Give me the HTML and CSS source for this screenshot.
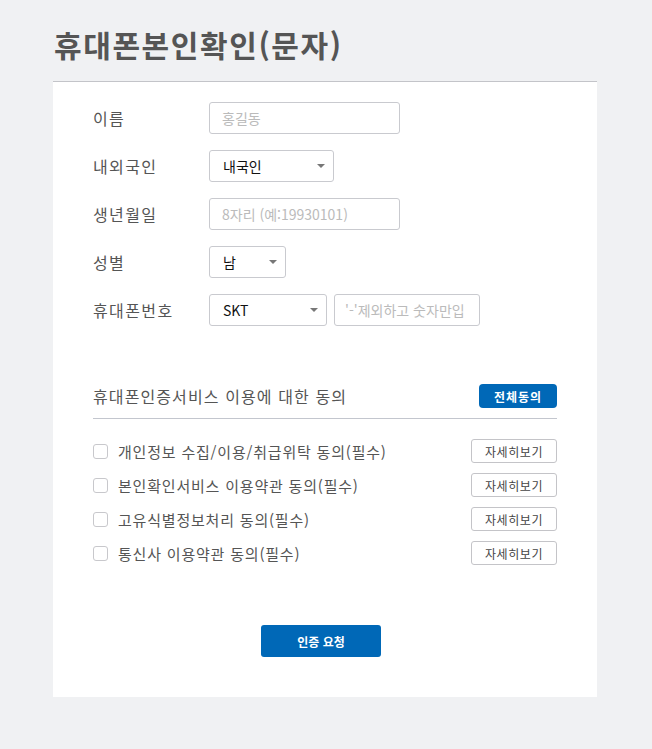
FILE: index.html
```html
<!DOCTYPE html>
<html lang="ko">
<head>
<meta charset="utf-8">
<title>휴대폰본인확인(문자)</title>
<link rel="stylesheet" href="styles.css">
</head>
<body>
<div class="page">
  <h1 class="title">휴대폰본인확인(문자)</h1>
  <div class="card">
    <div class="form">
      <div class="row">
        <label class="label">이름</label>
        <input class="input w-name" type="text" placeholder="홍길동">
      </div>
      <div class="row">
        <label class="label">내외국인</label>
        <div class="select w-nat"><span>내국인</span><i class="caret"></i></div>
      </div>
      <div class="row">
        <label class="label">생년월일</label>
        <input class="input w-name" type="text" placeholder="8자리 (예:19930101)">
      </div>
      <div class="row">
        <label class="label">성별</label>
        <div class="select w-sex"><span>남</span><i class="caret"></i></div>
      </div>
      <div class="row">
        <label class="label">휴대폰번호</label>
        <div class="select w-tel"><span>SKT</span><i class="caret"></i></div>
        <input class="input w-phone" type="text" placeholder="'-'제외하고 숫자만입">
      </div>
    </div>

    <div class="agree">
      <div class="agree-head">
        <span class="agree-title">휴대폰인증서비스 이용에 대한 동의</span>
        <button class="btn-all">전체동의</button>
      </div>
      <ul class="agree-list">
        <li class="agree-item"><span class="check"></span><span class="agree-text">개인정보 수집/이용/취급위탁 동의(필수)</span><button class="btn-more">자세히보기</button></li>
        <li class="agree-item"><span class="check"></span><span class="agree-text">본인확인서비스 이용약관 동의(필수)</span><button class="btn-more">자세히보기</button></li>
        <li class="agree-item"><span class="check"></span><span class="agree-text">고유식별정보처리 동의(필수)</span><button class="btn-more">자세히보기</button></li>
        <li class="agree-item"><span class="check"></span><span class="agree-text">통신사 이용약관 동의(필수)</span><button class="btn-more">자세히보기</button></li>
      </ul>
    </div>

    <div class="submit-wrap">
      <button class="btn-submit">인증 요청</button>
    </div>
  </div>
</div>
</body>
</html>
```

FILE: styles.css
```css
* { box-sizing: border-box; }
html, body { margin: 0; padding: 0; }
body {
  background: #f0f1f3;
  font-family: "Noto Sans CJK KR", "Noto Sans", "Liberation Sans", sans-serif;
  color: #555;
}
.page {
  width: 544px;
  margin-left: 53px;
  padding-top: 24px;
}
.title {
  margin: 0 0 17px 1px;
  font-size: 30px;
  line-height: 40px;
  font-weight: 700;
  color: #555;
  letter-spacing: 1.6px;
}
.card {
  background: #fff;
  border-top: 1px solid #c3c4c9;
  height: 616px;
  padding: 20px 40px 0 40px;
}
.form {
  display: flex;
  flex-direction: column;
  gap: 16px;
}
.row {
  display: flex;
  align-items: center;
  height: 32px;
}
.label {
  width: 116px;
  font-size: 16px;
  letter-spacing: 1.4px;
  color: #555;
}
.input, .select {
  height: 32px;
  border: 1px solid #c9cacf;
  border-radius: 3px;
  background: #fff;
  font-family: inherit;
  font-size: 14px;
  padding: 0 12px;
  color: #222;
}
.input::placeholder { color: #bbb; }
.w-name { width: 191px; }
.w-nat { width: 125px; }
.w-sex { width: 77px; }
.w-tel { width: 118px; }
.w-phone { width: 146px; margin-left: 7px; padding: 0 10px; }
.select {
  display: flex;
  align-items: center;
  justify-content: space-between;
  padding: 0 8px 0 13px;
}
.select span { color: #111; font-size: 14px; }
.caret {
  width: 0; height: 0;
  border-left: 4px solid transparent;
  border-right: 4px solid transparent;
  border-top: 4px solid #777;
}
.agree { margin-top: 58px; }
.agree-head {
  display: flex;
  justify-content: space-between;
  align-items: center;
  height: 24px;
  margin-bottom: 10px;
}
.agree-title { font-size: 16px; letter-spacing: 1.1px; color: #555; }
.btn-all {
  width: 78px; height: 24px;
  border: none;
  border-radius: 4px;
  background: #0068b7;
  color: #fff;
  font-family: inherit;
  font-size: 12px;
  font-weight: 700;
  letter-spacing: 1px;
  padding: 0;
}
.agree-list {
  list-style: none;
  margin: 0;
  padding: 20px 0 0 0;
  border-top: 1px solid #c3c6ce;
  display: flex;
  flex-direction: column;
  gap: 10px;
}
.agree-item {
  display: flex;
  align-items: center;
  height: 24px;
}
.check {
  width: 15px; height: 15px;
  border: 1px solid #c8c8cc;
  border-radius: 3px;
  margin-right: 10px;
}
.agree-text { flex: 1; font-size: 15px; letter-spacing: 0.8px; color: #555; }
.btn-more {
  width: 86px; height: 24px;
  border: 1px solid #c4c4c8;
  border-radius: 3px;
  background: #fff;
  color: #444;
  font-family: inherit;
  font-size: 12px;
  letter-spacing: 0.6px;
  padding: 0;
}
.submit-wrap {
  display: flex;
  justify-content: center;
  margin-top: 60px;
  padding-right: 8px;
}
.btn-submit {
  width: 120px; height: 32px;
  border: none;
  border-radius: 3px;
  background: #0068b7;
  color: #fff;
  font-family: inherit;
  font-size: 12px;
  font-weight: 700;
  padding: 0;
}
```
